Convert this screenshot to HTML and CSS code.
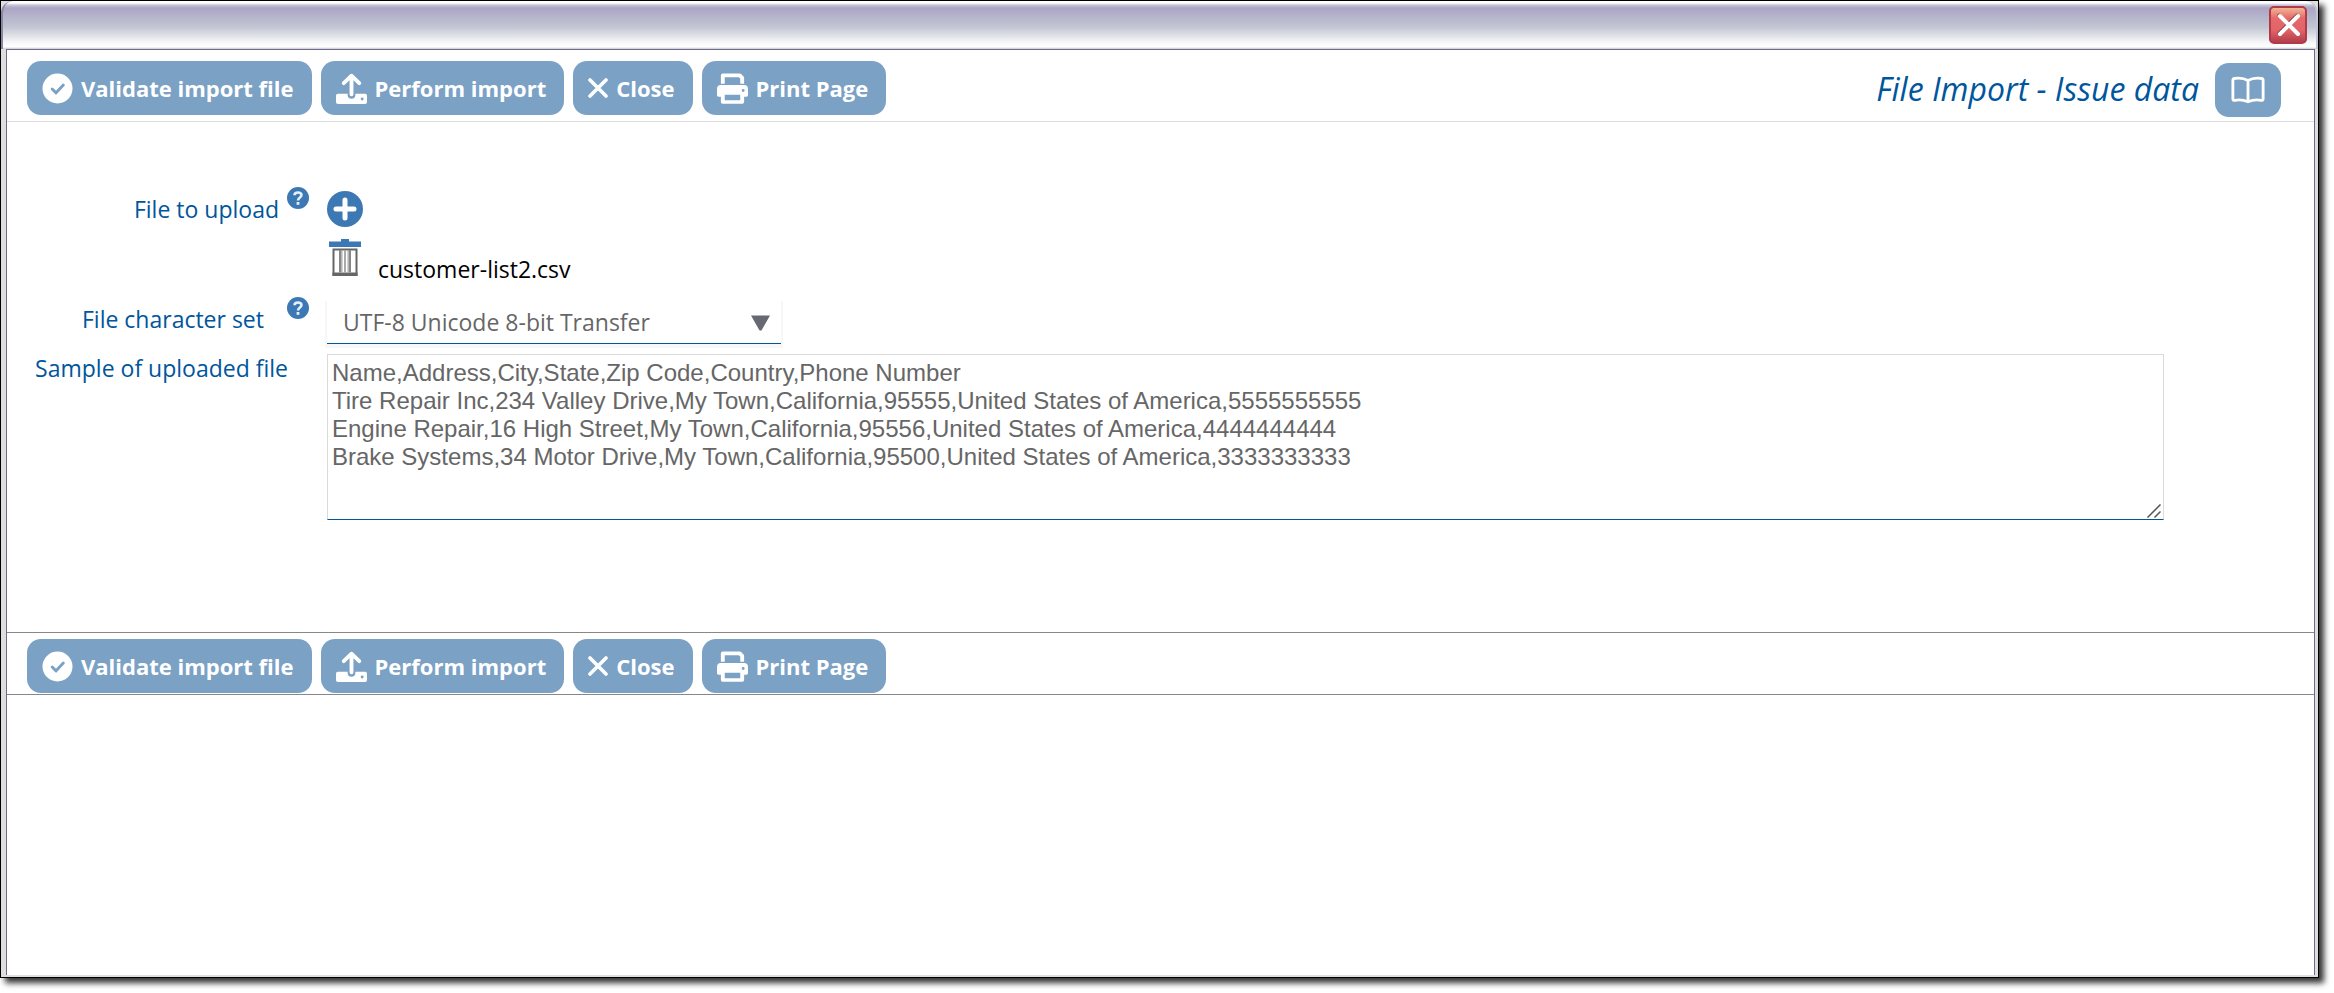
FILE: index.html
```html
<!DOCTYPE html>
<html lang="en">
<head>
  <meta charset="UTF-8">
  <meta name="viewport" content="width=device-width, initial-scale=1.0">
  <title>File Import - Issue data</title>
  <link rel="stylesheet" href="styles.css">
</head>
<body>
  <!-- shared icons -->
  <svg class="sprite" aria-hidden="true">
    <symbol id="icon-check" viewBox="0 0 32 32">
      <path fill="currentColor" fill-rule="evenodd" d="M16 0.500a15.500 15.500 0 1 0 0 31a15.500 15.500 0 0 0 0-31z"/>
      <path fill="none" stroke="#7ba1c5" stroke-width="3" stroke-linecap="round" stroke-linejoin="round" d="M10.500 16.500l4 4l7.500-8"/>
    </symbol>
    <symbol id="icon-upload" viewBox="0 0 32 32">
      <path fill="currentColor" fill-rule="evenodd" d="M2 21.500h10v1a3.500 3.500 0 0 0 8 0v-1H30a2 2 0 0 1 2 2v6.500a2 2 0 0 1-2 2H2a2 2 0 0 1-2-2V23.500a2 2 0 0 1 2-2zM27 25.300a1.500 1.500 0 1 0 0 3a1.500 1.500 0 0 0 0-3z"/>
      <path fill="none" stroke="currentColor" stroke-width="4" stroke-linecap="round" stroke-linejoin="round" d="M16 22V3M8 10.500L16 2.800L24 10.500"/>
    </symbol>
    <symbol id="icon-close" viewBox="0 0 20 20">
      <path fill="none" stroke="currentColor" stroke-width="3.600" stroke-linecap="round" d="M2 2L18 18M18 2L2 18"/>
    </symbol>
    <symbol id="icon-print" viewBox="0 0 32 32">
      <path fill="none" stroke="currentColor" stroke-width="4" stroke-linejoin="round" d="M6 11V2.500H23.500L26 5V11"/>
      <path fill="currentColor" fill-rule="evenodd" d="M4 12.500H28a4 4 0 0 1 4 4V23a1.500 1.500 0 0 1-1.500 1.500H28V30a1.800 1.800 0 0 1-1.800 1.800H5.800A1.800 1.800 0 0 1 4 30V24.500H1.500A1.500 1.500 0 0 1 0 23V16.500a4 4 0 0 1 4-4zM8 22.500V28H24V22.500zM27 16.500a1.500 1.500 0 1 0 0 3a1.500 1.500 0 0 0 0-3z"/>
    </symbol>
    <symbol id="icon-help" viewBox="0 0 22 22">
      <circle cx="11" cy="11" r="11" fill="#3c79b4"/>
      <path fill="none" stroke="#e6eef6" stroke-width="2.600" d="M7.500 8.300C7.500 4.600 14.500 4.600 14.500 8.100C14.500 10.600 11 10.400 11 13.600"/>
      <rect x="9.600" y="15" width="2.800" height="2.800" fill="#e6eef6"/>
    </symbol>
  </svg>

  <div class="window">
    <div class="titlebar">
      <button type="button" class="window-close" aria-label="Close window">
        <svg viewBox="0 0 34 34">
          <path fill="none" stroke="#7b3535" stroke-width="3" stroke-linecap="round" d="M8 7L26 25M26 7L8 25"/>
          <path fill="none" stroke="#fff" stroke-width="4" stroke-linecap="round" d="M9 8L27 26M27 8L9 26"/>
        </svg>
      </button>
    </div>

    <main class="content">
      <header class="toolbar">
        <div class="actions">
          <button type="button" class="btn"><svg class="icon"><use href="#icon-check"/></svg>Validate import file</button>
          <button type="button" class="btn"><svg class="icon"><use href="#icon-upload"/></svg>Perform import</button>
          <button type="button" class="btn"><svg class="icon icon-small"><use href="#icon-close"/></svg>Close</button>
          <button type="button" class="btn"><svg class="icon"><use href="#icon-print"/></svg>Print Page</button>
        </div>
        <h1>File Import - Issue data</h1>
        <button type="button" class="btn btn-help" aria-label="Help">
          <svg viewBox="0 0 36 28">
            <path fill="none" stroke="#fff" stroke-width="3" stroke-linejoin="round" d="M18 4C14 1.500 8 1 3.200 1.800A1.500 1.500 0 0 0 2 3.300V23.500C2 24.600 2.800 25.200 3.800 25C8.500 24 13.500 24.500 18 26.500C22.500 24.500 27.500 24 32.200 25C33.200 25.200 34 24.600 34 23.500V3.300A1.500 1.500 0 0 0 32.800 1.800C28 1 22 1.500 18 4zM18 4V26"/>
          </svg>
        </button>
      </header>

      <form class="import-form">
        <div class="label-cell">
          <label for="addFile">File to upload</label>
          <svg class="help"><use href="#icon-help"/></svg>
        </div>
        <div class="upload">
          <button type="button" id="addFile" class="icon-btn add-btn" aria-label="Add file">
            <svg viewBox="0 0 36 36">
              <circle cx="18" cy="18" r="18" fill="#3c79b4"/>
              <path fill="none" stroke="#fff" stroke-width="5" stroke-linecap="round" d="M18 9V27M9 18H27"/>
            </svg>
          </button>
          <div class="file">
            <button type="button" class="icon-btn delete-btn" aria-label="Remove file">
              <svg viewBox="0 0 32 38">
                <path fill="#3c79b4" d="M0 2.500H12V0H20V2.500H32V8H0z"/>
                <path fill="#fff" stroke="#666" stroke-width="2" d="M4.500 10.500H27.500V36H4.500z"/>
                <path fill="#666" d="M3.500 33.500H28.500V37H3.500z"/>
                <path fill="#888" d="M10 11H12.500V33.500H10zM19.500 11H22V33.500H19.500z"/>
                <path fill="#aaa" d="M15 11H17V33.500H15zM12.500 11H13.500V33.500H12.500zM18.500 11H19.500V33.500H18.500z"/>
              </svg>
            </button>
            <span class="file-name">customer-list2.csv</span>
          </div>
        </div>

        <div class="label-cell label-charset">
          <label for="charset">File character set</label>
          <svg class="help"><use href="#icon-help"/></svg>
        </div>
        <div class="select-wrap">
          <select id="charset">
            <option>UTF-8 Unicode 8-bit Transfer</option>
          </select>
          <svg class="arrow" viewBox="0 0 20 16"><path fill="#66696f" d="M0 0H20L11 16H9z"/></svg>
        </div>

        <div class="label-cell label-sample">
          <label for="sample">Sample of uploaded file</label>
        </div>
        <div class="sample-wrap">
          <textarea id="sample" spellcheck="false">Name,Address,City,State,Zip Code,Country,Phone Number
Tire Repair Inc,234 Valley Drive,My Town,California,95555,United States of America,5555555555
Engine Repair,16 High Street,My Town,California,95556,United States of America,4444444444
Brake Systems,34 Motor Drive,My Town,California,95500,United States of America,3333333333</textarea>
          <svg class="grip" viewBox="0 0 14 14"><path fill="none" stroke="#555" stroke-width="1.500" d="M0.500 13.500L13.500 0.500M7.500 13.500L13.500 7.500"/></svg>
        </div>
      </form>

      <footer class="actions bottom-bar">
        <button type="button" class="btn"><svg class="icon"><use href="#icon-check"/></svg>Validate import file</button>
        <button type="button" class="btn"><svg class="icon"><use href="#icon-upload"/></svg>Perform import</button>
        <button type="button" class="btn"><svg class="icon icon-small"><use href="#icon-close"/></svg>Close</button>
        <button type="button" class="btn"><svg class="icon"><use href="#icon-print"/></svg>Print Page</button>
      </footer>
    </main>
  </div>
</body>
</html>
```
FILE: styles.css
```css
:root {
  --blue: #00569c;
  --button: #7ba1c5;
  --line: #6e6a8c;
  --text: #666;
}

* {
  box-sizing: border-box;
  margin: 0;
  padding: 0;
}

body {
  display: flex;
  min-height: 100vh;
  padding: 0 15px 15px 0;
  font-family: "Trebuchet MS", "Open Sans", "Noto Sans", sans-serif;
  font-size: 23px;
  line-height: 32px;
  background: #fff;
}

button {
  border: none;
  cursor: pointer;
}

svg {
  display: block;
}

.sprite {
  display: none;
}

/* window frame */
.window {
  display: flex;
  flex: 1;
  flex-direction: column;
  border: 1px solid #000;
  background: #dedede;
  box-shadow: 5px 5px 6px rgba(0, 0, 0, 0.8);
}

.titlebar {
  display: flex;
  justify-content: flex-end;
  height: 48px;
  padding: 5px 9px;
  border-left: 2px solid #8a86a5;
  border-right: 2px solid #c6c3d6;
  border-radius: 12px 12px 0 0;
  background: linear-gradient(#fff 0, #fff 2px, #c9c5d8 4px, #aaa5c4 7px, #b6b5cb 16px, #c3c5d4 26px, #dddfe5 34px, #f5f6f8 41px, #fff 46px, #c8c8ce 48px);
}

.window-close {
  width: 38px;
  height: 38px;
  border: 2px solid #b03a48;
  border-radius: 5px;
  background: linear-gradient(#efb795, #e5686a 30%, #e26467 65%, #b43e4c);
}

.window-close svg {
  width: 34px;
  height: 34px;
}

.content {
  flex: 1;
  margin: 0 3px 2px 5px;
  border: 1px solid var(--line);
  border-bottom: none;
  background: #fff;
}

/* toolbars */
.toolbar {
  display: flex;
  align-items: flex-start;
  padding: 11px 33px 4px 20px;
  border-bottom: 1px solid #dcdcdc;
}

.actions {
  display: flex;
  gap: 9px;
}

.btn {
  display: flex;
  align-items: center;
  gap: 8px;
  height: 54px;
  padding: 0 18px 0 15px;
  border-radius: 14px;
  background: var(--button);
  color: #fff;
  font: bold 22px/32px "Trebuchet MS", "Open Sans", "Noto Sans", sans-serif;
  white-space: nowrap;
}

.icon {
  width: 31px;
  height: 31px;
}

.icon-small {
  width: 20px;
  height: 20px;
}

h1 {
  margin: 10px 16px 0 auto;
  color: var(--blue);
  font-size: 32px;
  font-style: italic;
  font-weight: normal;
  line-height: 36px;
}

.btn-help {
  margin-top: 2px;
  padding: 0 16px;
}

.btn-help svg {
  width: 34px;
  height: 28px;
}

.bottom-bar {
  padding: 6px 20px 1px;
  border-top: 1px solid #888;
  border-bottom: 1px solid #888;
}

/* form */
.import-form {
  display: grid;
  grid-template-columns: 302px 1fr;
  column-gap: 18px;
  align-items: start;
  padding: 65px 150px 112px 0;
}

.label-cell {
  display: flex;
  justify-content: flex-end;
  gap: 8px;
  color: var(--blue);
}

.label-cell label {
  padding-top: 6px;
}

.label-charset {
  gap: 23px;
}

.label-sample {
  padding-right: 21px;
}

.label-sample label {
  padding-top: 0;
  line-height: 28px;
}

.help {
  width: 22px;
  height: 22px;
}

.icon-btn {
  display: block;
  background: none;
}

.add-btn svg {
  width: 36px;
  height: 36px;
}

.upload {
  padding: 4px 0 12px;
}

.file {
  display: flex;
  align-items: flex-start;
  gap: 17px;
  padding: 12px 0 0 2px;
}

.file-name {
  padding-top: 14px;
  color: #000;
}

.delete-btn svg {
  width: 32px;
  height: 38px;
}

.select-wrap {
  position: relative;
  width: 454px;
  margin: 4px 0 10px;
}

select {
  display: block;
  width: 100%;
  height: 43px;
  padding: 0 16px;
  border: none;
  border-bottom: 1px solid var(--blue);
  background: #fff;
  box-shadow: 0 2px 0 2px #f7f7f7;
  color: var(--text);
  font: 23px/32px "Trebuchet MS", "Open Sans", "Noto Sans", sans-serif;
  appearance: none;
}

.arrow {
  position: absolute;
  top: 14px;
  right: 11px;
  width: 19px;
  height: 16px;
  pointer-events: none;
}

.sample-wrap {
  position: relative;
}

textarea {
  display: block;
  width: 100%;
  height: 166px;
  padding: 4px;
  border: 1px solid #dadada;
  border-bottom-color: var(--blue);
  outline: none;
  color: var(--text);
  font: 24px/28px Arial, "Liberation Sans", sans-serif;
  resize: none;
}

.grip {
  position: absolute;
  right: 3px;
  bottom: 2px;
  width: 14px;
  height: 14px;
}
```
